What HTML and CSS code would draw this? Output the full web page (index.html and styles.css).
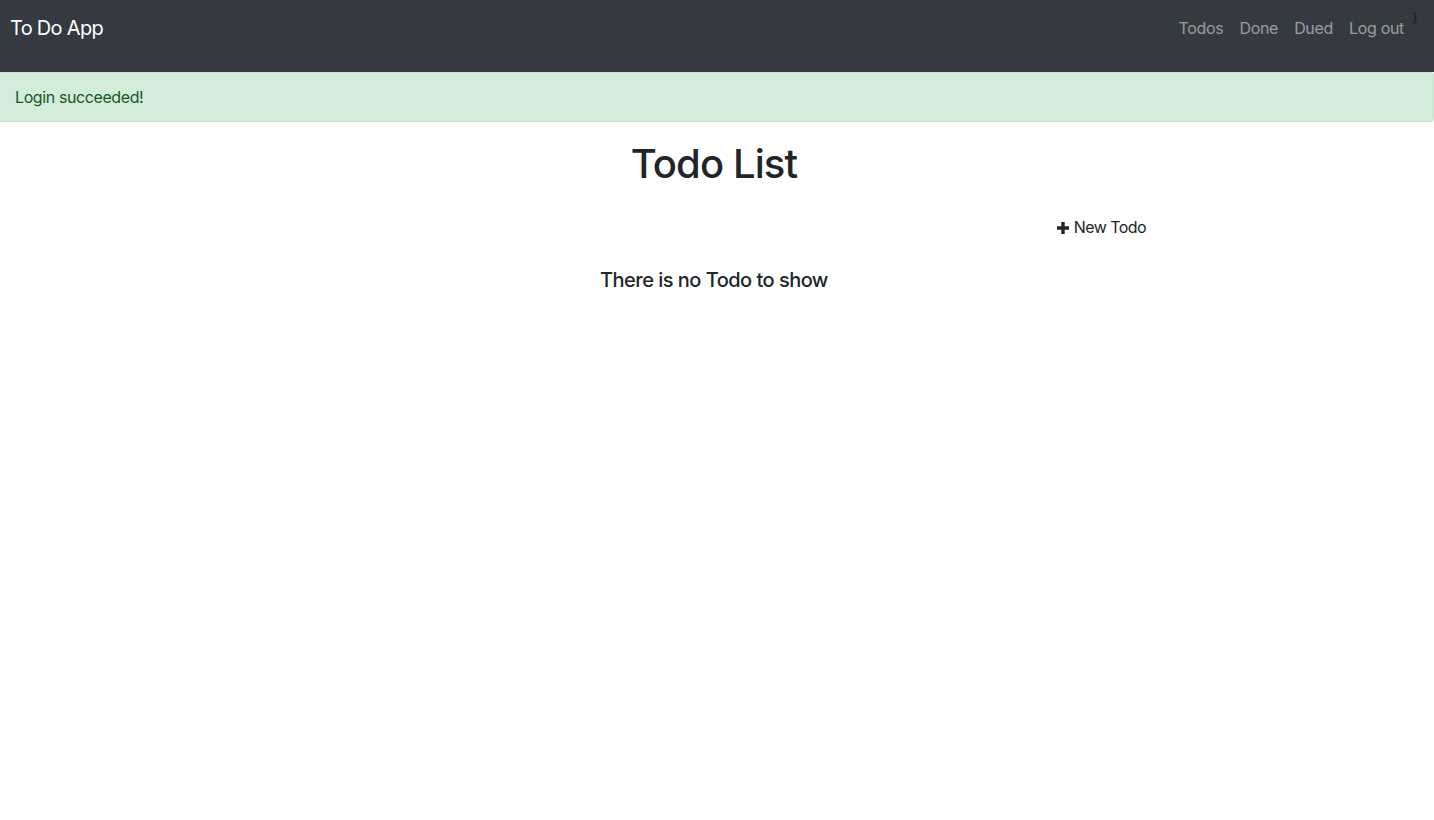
FILE: index.html
```html
<!DOCTYPE html>
<html>
<head>
<meta charset="utf-8">
<link rel="stylesheet" href="styles.css">
</head>
<body>
<nav class="navbar">
  <a class="brand" href="#">To Do App</a>
  <ul class="nav">
    <li><a href="#">Todos</a></li>
    <li><a href="#">Done</a></li>
    <li><a href="#">Dued</a></li>
    <li><a href="#">Log out</a></li>
  </ul>
  <span class="stray">}</span>
</nav>
<div class="alert">Login succeeded!</div>
<main class="main">
  <h1 class="title">Todo List</h1>
  <div class="actions">
    <a class="new-todo" href="#"><svg class="plus" viewBox="0 0 12 12" width="12" height="12"><path d="M4.3 0h3.4v4.3H12v3.4H7.7V12H4.3V7.7H0V4.3h4.3z" fill="#212529"/></svg>New Todo</a>
  </div>
  <h5 class="empty">There is no Todo to show</h5>
</main>
</body>
</html>
```

FILE: styles.css
```css
html, body {
  margin: 0;
  padding: 0;
}
body {
  font-family: Inter, "Liberation Sans", sans-serif;
  color: #212529;
  background: #fff;
  font-size: 16px;
}
a { text-decoration: none; }
.navbar {
  background: #343a40;
  height: 72px;
  display: flex;
  align-items: flex-start;
  padding: 0 11px;
  box-sizing: border-box;
  position: relative;
}
.brand {
  color: #fff;
  font-size: 20px;
  line-height: 56px;
  letter-spacing: -0.7px;
  margin-left: -1px;
}
.nav {
  list-style: none;
  margin: 0 0 0 auto;
  padding: 0;
  display: flex;
  gap: 16px;
  padding-right: 19px;
}
.nav a {
  color: rgba(255,255,255,.5);
  font-size: 16px;
  line-height: 56px;
  letter-spacing: -0.32px;
}
.stray {
  position: absolute;
  right: 15px;
  top: 10px;
  color: #1b1e21;
  font-size: 13px;
  font-family: "DejaVu Serif", serif;
}
.alert {
  background: #d4edda;
  color: #155724;
  border: 1px solid #c3e6cb;
  border-left: none;
  border-radius: 0 4px 4px 0;
  height: 50px;
  box-sizing: border-box;
  padding: 0 15px;
  line-height: 48px;
  font-size: 16px;
  letter-spacing: -0.4px;
}
.main {
  width: 864px;
  padding-right: 6px;
  margin: 0 auto;
  text-align: center;
}
.title {
  font-size: 40px;
  font-weight: 500;
  margin: 18px 0 0;
  line-height: 48px;
  letter-spacing: -0.9px;
}
.actions {
  text-align: right;
  margin-top: 27px;
}
.new-todo {
  color: #212529;
  font-size: 16px;
  line-height: 24px;
  letter-spacing: -0.55px;
}
.plus {
  margin-right: 5px;
  vertical-align: -1px;
}
.empty {
  font-size: 20px;
  font-weight: 500;
  margin: 29px 0 0;
  line-height: 24px;
  letter-spacing: -0.52px;
}
```
